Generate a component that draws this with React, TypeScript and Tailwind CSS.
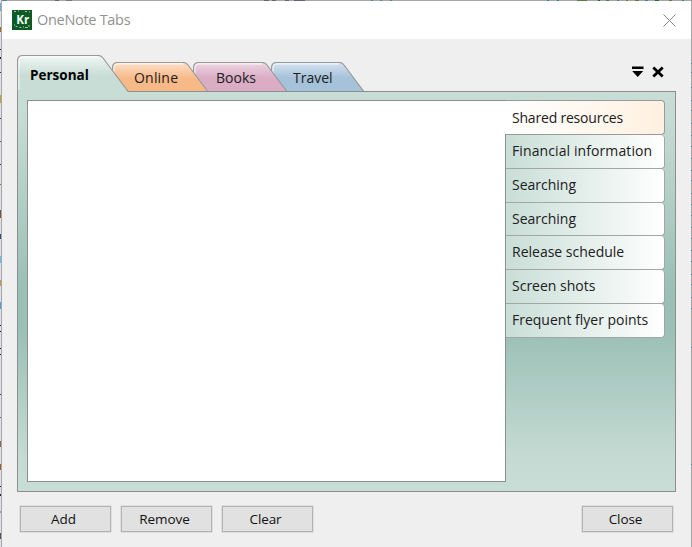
import React from "react";

type TabProps = { label: string; width: number; height: number; slant: number; from: string; to: string; id: string; className: string; textClass: string };

function NotebookTab({ label, width: w, height: h, slant, from, to, id, className, textClass }: TabProps) {
  const top = w - slant;
  const outline = `M.5 ${h}V6Q.5 .5 6 .5H${top - 3}Q${top} .5 ${top + 2} 3L${w - 0.5} ${h}`;
  return (
    <div className={`relative shrink-0 ${className}`}>
      <svg className="absolute inset-0" width={w} height={h} viewBox={`0 0 ${w} ${h}`}>
        <defs>
          <linearGradient id={id} x1="0" y1="0" x2="0" y2="1">
            <stop offset="0" stopColor={from} />
            <stop offset=".55" stopColor={to} />
            <stop offset="1" stopColor={to} />
          </linearGradient>
        </defs>
        <path d={`${outline}Z`} fill={`url(#${id})`} />
        <path d={`M1.8 ${h - 2}V6.5Q1.8 1.8 6.5 1.8H${top - 3}`} fill="none" stroke="#fff" strokeOpacity=".75" strokeWidth="1.3" />
        <path d={outline} fill="none" stroke="#979b9a" strokeWidth="1.2" />
      </svg>
      <span className={`relative block whitespace-nowrap ${textClass}`}>{label}</span>
    </div>
  );
}

const pages = [
  { label: "Financial information", cls: "h-[34px] tracking-[0.1px]" },
  { label: "Searching", cls: "h-[34px]" },
  { label: "Searching", cls: "h-[33px]" },
  { label: "Release schedule", cls: "h-[34px]" },
  { label: "Screen shots", cls: "h-[34px]" },
  { label: "Frequent flyer points", cls: "h-[34px]" },
];

function PushButton({ children }: { children: string }) {
  return (
    <button className="h-[26px] w-[91px] border border-[#b3b3b3] bg-[#e1e1e1] pr-[4px] text-[13.5px] leading-[24px] tracking-[-0.1px] text-[#111] shadow-[0_0_0_0.5px_#cfcfcf]">
      {children}
    </button>
  );
}

const leftMarks: [number, number, string][] = [
  [3, 8, "#77a7de"], [27, 5, "#a66a2d"], [49, 1, "#222"], [57, 2, "#222"], [72, 1, "#702030"], [95, 8, "#b9a63c"],
  [118, 1, "#702030"], [141, 1, "#276991"], [164, 1, "#702030"], [184, 1, "#ad6b25"], [210, 8, "#7b5142"],
  [234, 5, "#344b79"], [256, 7, "#6ebcec"], [280, 6, "#c7974e"], [302, 7, "#549ce0"], [325, 1, "#222"],
  [331, 1, "#222"], [348, 1, "#222"], [354, 1, "#222"], [394, 1, "#702030"], [417, 1, "#2584ac"],
  [441, 6, "#856c49"], [464, 6, "#9b6027"], [486, 1, "#222"], [494, 2, "#222"], [511, 2, "#5ab0e2"], [533, 6, "#555"],
];
const topMarks: [number, number, string][] = [
  [2, 5, "#567da8"], [55, 4, "#666"], [66, 6, "#777"], [264, 5, "#666"], [272, 4, "#666"], [285, 4, "#666"],
  [294, 11, "#606080"], [371, 2, "#438eaa"], [380, 2, "#438eaa"], [390, 2, "#438eaa"], [547, 2, "#278ba0"],
  [557, 2, "#278ba0"], [577, 10, "#537d45"], [598, 2, "#206e32"], [606, 3, "#557d35"], [617, 2, "#447da0"],
  [626, 2, "#777a30"], [635, 4, "#687733"], [645, 3, "#447da0"], [655, 4, "#206e32"], [669, 3, "#557d35"], [682, 2, "#278ba0"],
];
const rightMarks = [63, 72, 87, 100, 110, 123, 135, 146, 158, 170, 180, 193, 204, 215, 227, 238, 250, 261, 274, 284, 297, 308, 347, 464];

export default function App() {
  return (
    <div className="relative h-[547px] w-[692px] overflow-hidden bg-[#a6a6a6] pl-[2px] pr-px pt-px font-['Open_Sans','Noto_Sans',sans-serif] text-[#202020]">
      <div className="absolute inset-y-0 left-0 w-px bg-[#dfe0e8]" />
      {leftMarks.map(([y, h, c]) => (
        <i key={y} className="absolute left-0 w-px" style={{ top: y, height: h, background: c }} />
      ))}
      {topMarks.map(([x, w, c]) => (
        <i key={x} className="absolute top-0 h-px" style={{ left: x, width: w, background: c }} />
      ))}
      {rightMarks.map((y) => (
        <i key={y} className="absolute right-0 h-px w-px bg-[#43738c]" style={{ top: y }} />
      ))}

      <div className="flex h-[546px] flex-col bg-[#efefef]">
        <header className="flex h-[38px] shrink-0 items-center bg-white pl-[10px] pr-[15px]">
          <svg className="-mt-px shrink-0" width="20" height="20" viewBox="0 0 20 20">
            <rect width="20" height="20" fill="#0d5a24" />
            <path d="M2 1.5h2M6 1h1M13 1.5h2M17 2h1M3.5 16.5h2M2 15h1M7.5 17.5h2M11 17h1M13 17.5h3M17 15v2" stroke="#a6c6a9" />
            <text x="4.2" y="13.8" fill="#f5fff5" fontFamily="Open Sans" fontWeight="700" fontSize="12.5" textLength="13" lengthAdjust="spacingAndGlyphs">Kr</text>
          </svg>
          <h1 className="ml-[5px] whitespace-nowrap text-[14.5px] leading-5 tracking-[-0.3px] text-[#929292]">OneNote Tabs</h1>
          <svg className="ml-auto" width="13" height="13" viewBox="0 0 13 13" stroke="#858585" strokeWidth="1">
            <path d="M.5 .5l12 12M12.5 .5l-12 12" />
          </svg>
        </header>

        <main className="pl-[15px] pr-[14px] pt-[16px]">
          <div className="flex h-[36px] items-end">
            <NotebookTab id="g1" label="Personal" width={112} height={37} slant={28} from="#f0f6f4" to="#c8ddd6" className="z-40 -mb-[1px] h-[37px] w-[95px]" textClass="pl-[13px] pt-[10px] text-[13.5px] leading-5 font-bold text-black" />
            <NotebookTab id="g2" label="Online" width={96} height={29} slant={22} from="#fde0ca" to="#f8b988" className="z-30 h-[29px] w-[81px]" textClass="pl-[22px] pt-[6px] text-[14px] leading-5 tracking-[0.2px]" />
            <NotebookTab id="g3" label="Books" width={94} height={29} slant={22} from="#edd5e0" to="#daadc4" className="z-20 h-[29px] w-[78px]" textClass="pl-[23px] pt-[6px] text-[14px] leading-5" />
            <NotebookTab id="g4" label="Travel" width={93} height={29} slant={22} from="#d4e2ee" to="#a5c2da" className="z-10 h-[29px] w-[93px]" textClass="pl-[22px] pt-[6px] text-[14px] leading-5" />
            <svg className="mb-[12px] ml-auto mr-[12px]" width="34" height="14" viewBox="0 0 34 14">
              <path d="M1 1.5h11.5v2.5H1zM1.2 6h11L6.7 12z" />
              <path d="M22.3 2.5l9.4 9M31.7 2.5l-9.4 9" stroke="black" strokeWidth="2.8" />
            </svg>
          </div>

          <section className="flex h-[401px] w-[659px] border border-[#8c8f8e] bg-[linear-gradient(#c8ddd6_0%,#c5dbd4_7%,#9abfb4_50%,#9abfb4_59%,#c4dad3_91%,#c8ddd6_100%)] pl-[9px] pt-[8px]">
            <div className="h-[382px] w-[479px] border border-r-0 border-[#8c8f8e] bg-white">
              <div className="mt-[33px] h-[347px] w-full border-r border-[#8c8f8e]" />
            </div>
            <nav className="w-[159px] text-[14px] leading-5">
              <div className="h-[35px] rounded-r-[4px] border border-l-0 border-[#979b9a] bg-gradient-to-r from-white to-[#fff0e0] pl-[6px] pt-[7px] tracking-[-0.2px]">Shared resources</div>
              {pages.map((p, i) => (
                <div key={i} className={`whitespace-nowrap rounded-r-[4px] border-b border-r border-[#a2a6a4] bg-gradient-to-r from-[#c9ded7] to-white pl-[6px] pt-[6px] ${p.cls}`}>
                  {p.label}
                </div>
              ))}
            </nav>
          </section>
        </main>

        <footer className="mt-[14px] flex gap-[10px] pl-[18px] pr-[18px]">
          <PushButton>Add</PushButton>
          <PushButton>Remove</PushButton>
          <PushButton>Clear</PushButton>
          <div className="ml-auto"><PushButton>Close</PushButton></div>
        </footer>
      </div>
    </div>
  );
}
